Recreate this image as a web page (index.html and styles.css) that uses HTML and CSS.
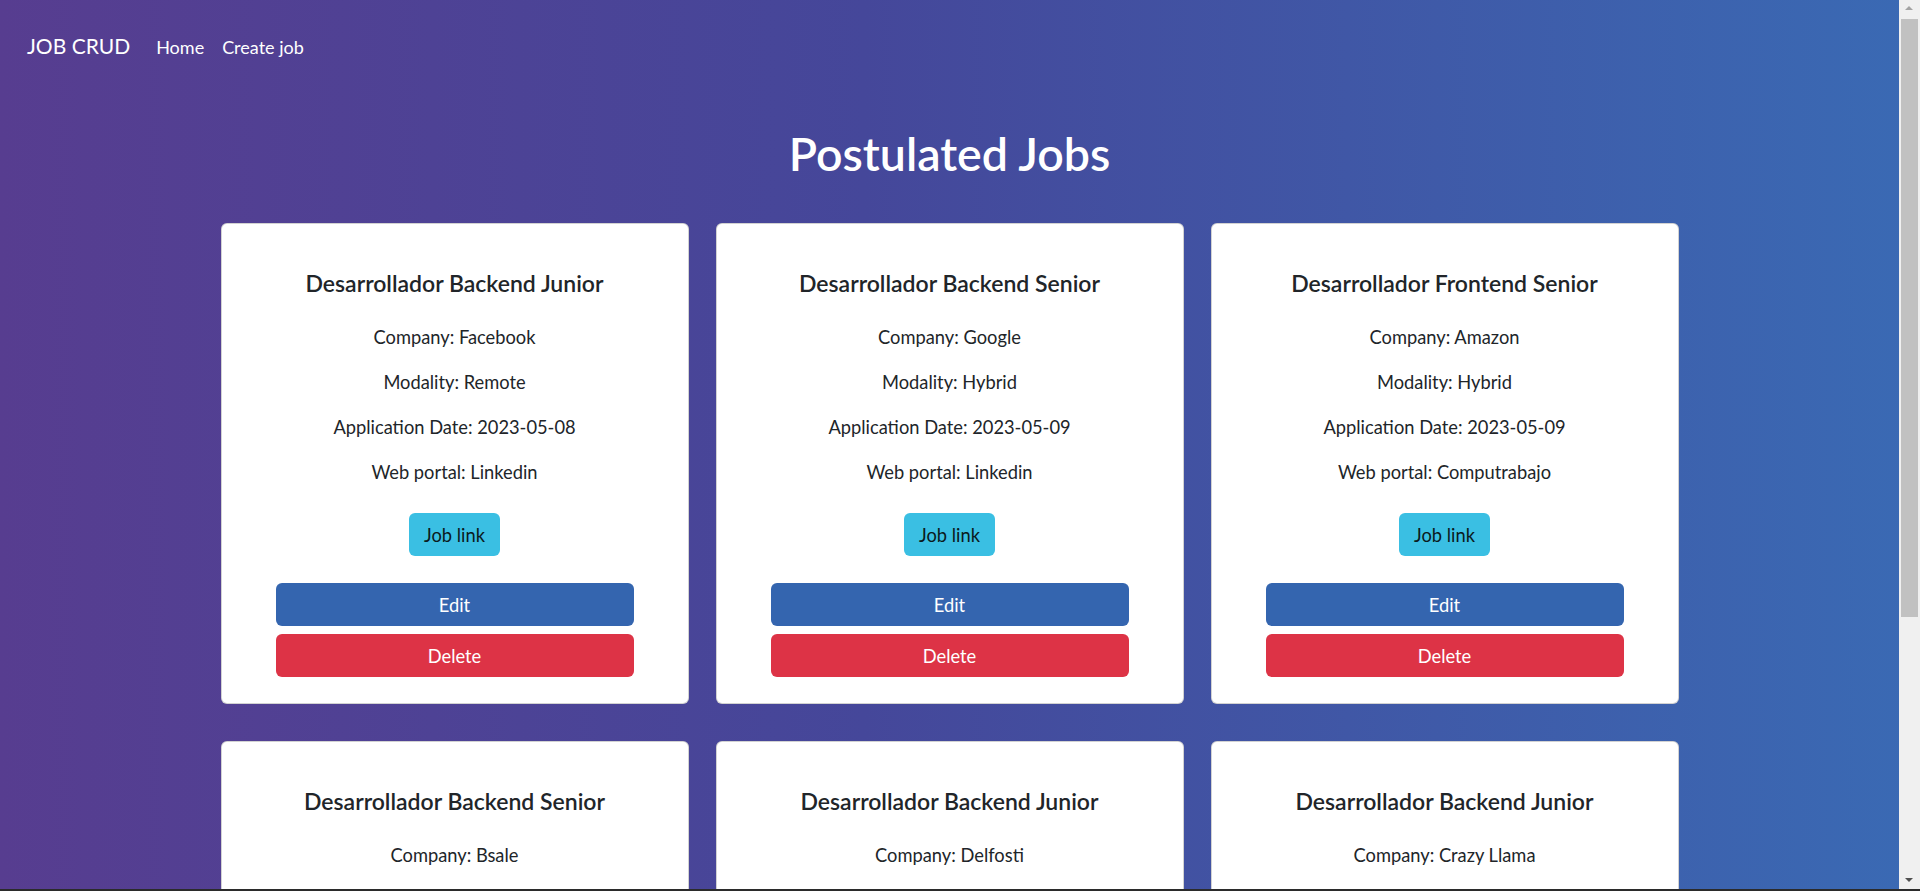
FILE: index.html
```html
<!DOCTYPE html>
<html lang="en">
<head>
<meta charset="utf-8">
<title>JOB CRUD</title>
<link rel="stylesheet" href="styles.css">
</head>
<body>
<nav class="navbar">
  <a class="brand" href="#">JOB CRUD</a>
  <a class="nav-link" href="#">Home</a>
  <a class="nav-link" href="#">Create job</a>
</nav>
<main class="main">
  <h1 class="page-title">Postulated Jobs</h1>
  <section class="cards">
    <article class="card">
      <h5 class="card-title">Desarrollador Backend Junior</h5>
      <p class="card-text">Company: Facebook</p>
      <p class="card-text">Modality: Remote</p>
      <p class="card-text">Application Date: 2023-05-08</p>
      <p class="card-text">Web portal: Linkedin</p>
      <div class="link-row"><a class="btn btn-info" href="#">Job link</a></div>
      <div class="actions">
        <button class="btn btn-edit">Edit</button>
        <button class="btn btn-delete">Delete</button>
      </div>
    </article>
    <article class="card">
      <h5 class="card-title">Desarrollador Backend Senior</h5>
      <p class="card-text">Company: Google</p>
      <p class="card-text">Modality: Hybrid</p>
      <p class="card-text">Application Date: 2023-05-09</p>
      <p class="card-text">Web portal: Linkedin</p>
      <div class="link-row"><a class="btn btn-info" href="#">Job link</a></div>
      <div class="actions">
        <button class="btn btn-edit">Edit</button>
        <button class="btn btn-delete">Delete</button>
      </div>
    </article>
    <article class="card">
      <h5 class="card-title">Desarrollador Frontend Senior</h5>
      <p class="card-text">Company: Amazon</p>
      <p class="card-text">Modality: Hybrid</p>
      <p class="card-text">Application Date: 2023-05-09</p>
      <p class="card-text">Web portal: Computrabajo</p>
      <div class="link-row"><a class="btn btn-info" href="#">Job link</a></div>
      <div class="actions">
        <button class="btn btn-edit">Edit</button>
        <button class="btn btn-delete">Delete</button>
      </div>
    </article>
    <article class="card">
      <h5 class="card-title">Desarrollador Backend Senior</h5>
      <p class="card-text">Company: Bsale</p>
      <p class="card-text">Modality: Remote</p>
      <p class="card-text">Application Date: 2023-05-10</p>
      <p class="card-text">Web portal: Linkedin</p>
      <div class="link-row"><a class="btn btn-info" href="#">Job link</a></div>
      <div class="actions">
        <button class="btn btn-edit">Edit</button>
        <button class="btn btn-delete">Delete</button>
      </div>
    </article>
    <article class="card">
      <h5 class="card-title">Desarrollador Backend Junior</h5>
      <p class="card-text">Company: Delfosti</p>
      <p class="card-text">Modality: Hybrid</p>
      <p class="card-text">Application Date: 2023-05-10</p>
      <p class="card-text">Web portal: Linkedin</p>
      <div class="link-row"><a class="btn btn-info" href="#">Job link</a></div>
      <div class="actions">
        <button class="btn btn-edit">Edit</button>
        <button class="btn btn-delete">Delete</button>
      </div>
    </article>
    <article class="card">
      <h5 class="card-title">Desarrollador Backend Junior</h5>
      <p class="card-text">Company: Crazy Llama</p>
      <p class="card-text">Modality: Remote</p>
      <p class="card-text">Application Date: 2023-05-11</p>
      <p class="card-text">Web portal: Computrabajo</p>
      <div class="link-row"><a class="btn btn-info" href="#">Job link</a></div>
      <div class="actions">
        <button class="btn btn-edit">Edit</button>
        <button class="btn btn-delete">Delete</button>
      </div>
    </article>
  </section>
</main>
<div class="scrollbar" aria-hidden="true">
  <span class="sb-arrow sb-up"></span>
  <span class="sb-thumb"></span>
  <span class="sb-arrow sb-down"></span>
</div>
<div class="window-edge"></div>
</body>
</html>
```

FILE: styles.css
```css
html {
  background: #4a4496;
}

body {
  margin: 0;
  padding-right: 21px;
  min-height: 100vh;
  font-family: Lato, "Open Sans", sans-serif;
  color: #212529;
  background: linear-gradient(to right, #573d90 0%, #45479a 45%, #3a6ab4 100%);
  background-attachment: fixed;
}

.navbar {
  display: flex;
  align-items: baseline;
  padding: 28px 27px 26px;
}

.brand {
  font-size: 21px;
  line-height: 36px;
  color: #fff;
  text-decoration: none;
  margin-right: 26px;
}

.nav-link {
  font-size: 18px;
  line-height: 30px;
  color: #fff;
  text-decoration: none;
  margin-right: 18px;
}

.main {
  padding-bottom: 56px;
}

.page-title {
  margin: 35px 0 42px;
  text-align: center;
  color: #fff;
  font-size: 46.5px;
  line-height: 56px;
  font-weight: 600;
}

.cards {
  display: grid;
  grid-template-columns: repeat(3, 468px);
  column-gap: 27px;
  row-gap: 37px;
  justify-content: center;
}

.card {
  background: #fff;
  border: 1px solid rgba(0, 0, 0, 0.175);
  border-radius: 6px;
  padding: 44px 54px 26px;
  text-align: center;
}

.card-title {
  margin: 0 0 24px;
  font-size: 23px;
  line-height: 30px;
  font-weight: 600;
}

.card-text {
  margin: 0 0 15px;
  font-size: 18.3px;
  line-height: 30px;
}

.link-row {
  padding-top: 11px;
  display: flex;
  justify-content: center;
}

.btn {
  display: inline-flex;
  align-items: center;
  justify-content: center;
  height: 43px;
  border: 0;
  border-radius: 6px;
  font-family: inherit;
  font-size: 18.3px;
  text-decoration: none;
  cursor: pointer;
}

.btn-info {
  padding: 0 15px;
  background: #3abfe3;
  color: #0b1a20;
}

.actions {
  margin-top: 27px;
  display: flex;
  flex-direction: column;
  gap: 8px;
}

.btn-edit {
  width: 100%;
  background: #3465af;
  color: #fff;
}

.btn-delete {
  width: 100%;
  background: #dd3346;
  color: #fff;
}

.scrollbar {
  position: fixed;
  top: 0;
  right: 0;
  bottom: 0;
  width: 21px;
  background: #f0f0f0;
}

.sb-thumb {
  position: absolute;
  top: 19px;
  left: 2px;
  right: 2px;
  height: 598px;
  background: #c1c1c1;
}

.sb-arrow {
  position: absolute;
  left: 6px;
  width: 0;
  height: 0;
  border-left: 4.5px solid transparent;
  border-right: 4.5px solid transparent;
}

.sb-up {
  top: 6px;
  border-bottom: 4px solid #a3a3a3;
}

.sb-down {
  bottom: 9px;
  border-top: 4px solid #505050;
}

.window-edge {
  position: fixed;
  left: 0;
  right: 0;
  bottom: 0;
  height: 2px;
  background: #2b2b2b;
}
```
